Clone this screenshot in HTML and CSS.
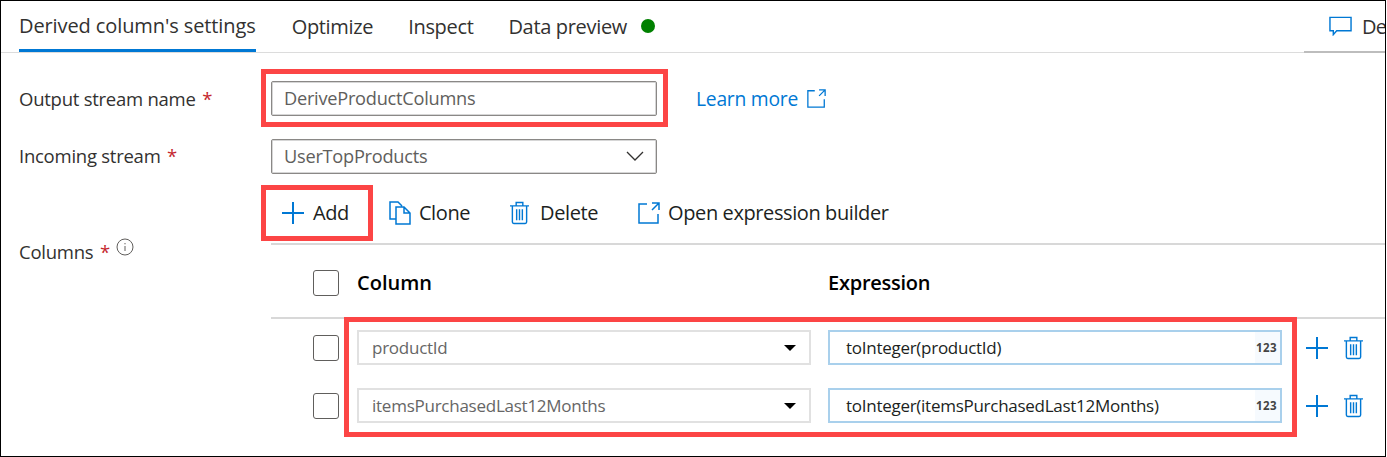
FILE: index.html
```html
<!DOCTYPE html>
<html>
<head>
    <title>Derived column's settings</title>
    <link rel="stylesheet" href="styles.css">
</head>
<body>
    <svg class="defs" width="0" height="0">
        <symbol id="plus" viewBox="0 0 22 22"><path d="M0 11H22M11 0V22" fill="none" stroke="currentColor" stroke-width="2"/></symbol>
        <symbol id="trash" viewBox="0 0 20 24"><path d="M0 4.500H20M2.500 4.500V21.500Q2.500 23 4 23H16Q17.500 23 17.500 21.500V4.500M6.500 4.500V1H13.500V4.500M7 8V19.500M10 8V19.500M13 8V19.500" fill="none" stroke="currentColor" stroke-width="1.500"/></symbol>
        <symbol id="open" viewBox="0 0 22 22"><path d="M9 2H1V21H20V12M14 1H21V8M21 1L14 8" fill="none" stroke="currentColor" stroke-width="1.500"/></symbol>
    </svg>

    <div class="frame">
        <nav class="tabs">
            <a class="tab active">Derived column's settings</a>
            <a class="tab">Optimize</a>
            <a class="tab">Inspect</a>
            <a class="tab">Data preview <span class="dot"></span></a>
            <div class="tabs-right">
                <svg class="comment" viewBox="0 0 24 20"><path d="M1 1H23V15H8L4.500 19V15H1Z" fill="none" stroke="currentColor" stroke-width="1.500"/></svg>
                <span>De</span>
            </div>
        </nav>

        <main class="form">
            <label class="label row-output">Output stream name <span class="req">*</span></label>
            <div class="output-line">
                <div class="field">DeriveProductColumns</div>
                <a class="learn">Learn more <svg class="icon-18"><use href="#open"/></svg></a>
            </div>

            <label class="label row-incoming">Incoming stream <span class="req">*</span></label>
            <div class="field select">
                UserTopProducts
                <svg class="chevron" viewBox="0 0 18 10"><path d="M1 1L9 9L17 1" fill="none" stroke="currentColor" stroke-width="1.300"/></svg>
            </div>

            <label class="label row-columns">Columns <span class="req">*</span>
                <svg class="info" viewBox="0 0 18 18"><circle cx="9" cy="9" r="8" fill="none" stroke="currentColor"/><path d="M9 8V13M9 5V6.300" stroke="currentColor"/></svg>
            </label>
            <div class="columns">
                <div class="toolbar">
                    <button class="tool tool-add"><svg class="icon-22"><use href="#plus"/></svg>Add</button>
                    <button class="tool tool-clone">
                        <svg class="icon-clone" viewBox="0 0 22 24"><path d="M7 18H1V1H9L13 5M7 6H15L21 12V23H7ZM15 6V12H21" fill="none" stroke="currentColor" stroke-width="1.500"/></svg>Clone</button>
                    <button class="tool tool-delete"><svg class="icon-trash"><use href="#trash"/></svg>Delete</button>
                    <button class="tool"><svg class="icon-22"><use href="#open"/></svg>Open expression builder</button>
                </div>

                <div class="grid-head">
                    <span class="check"></span>
                    <strong class="head-col">Column</strong>
                    <strong>Expression</strong>
                </div>

                <div class="grid-body">
                    <div class="grid-row">
                        <span class="check"></span>
                        <div class="col-select">productId<span class="caret"></span></div>
                        <div class="expr"><span>toInteger(productId)</span><span class="type">123</span></div>
                        <svg class="icon-22 act-add"><use href="#plus"/></svg>
                        <svg class="icon-trash act-del"><use href="#trash"/></svg>
                    </div>
                    <div class="grid-row">
                        <span class="check"></span>
                        <div class="col-select">itemsPurchasedLast12Months<span class="caret"></span></div>
                        <div class="expr"><span>toInteger(itemsPurchasedLast12Months)</span><span class="type">123</span></div>
                        <svg class="icon-22 act-add"><use href="#plus"/></svg>
                        <svg class="icon-trash act-del"><use href="#trash"/></svg>
                    </div>
                </div>
            </div>
        </main>

        <!-- red callouts drawn over the form -->
        <div class="callout callout-name"></div>
        <div class="callout callout-add"></div>
        <div class="callout callout-rows"></div>
    </div>
</body>
</html>
```

FILE: styles.css
```css
* {
    box-sizing: border-box;
}

html, body {
    margin: 0;
    background: white;
}

.defs {
    position: absolute;
}

.frame {
    position: relative;
    width: 1386px;
    height: 457px;
    overflow: hidden;
    border: 1px solid black;
    font-family: "Open Sans", "Noto Sans", sans-serif;
    font-size: 18.5px;
    letter-spacing: -0.25px;
    color: #323130;
    background: white;
}

svg {
    flex: none;
}

/* tabs */
.tabs {
    display: flex;
    align-items: stretch;
    height: 52px;
    padding-left: 18px;
    border-bottom: 1px solid #dcdcdc;
    font-size: 20px;
    letter-spacing: -0.33px;
}

.tab {
    display: flex;
    align-items: center;
    gap: 14px;
    height: 51px;
    margin-right: 35px;
    padding-bottom: 1px;
    white-space: nowrap;
}

.tab.active {
    margin-right: 36px;
    padding-top: 2px;
    border-bottom: 3px solid #0078d4;
    letter-spacing: -0.1px;
}

.dot {
    width: 14px;
    height: 14px;
    border-radius: 50%;
    background: #008000;
}

.tabs-right {
    display: flex;
    align-items: center;
    gap: 10px;
    width: 81px;
    height: 52px;
    margin-left: auto;
    padding-left: 25px;
    border-bottom: 2px solid #bdbdbd;
    letter-spacing: -0.8px;
}

.comment {
    width: 23px;
    height: 20px;
    color: #0078d4;
}

/* form */
.form {
    display: grid;
    grid-template-columns: 252px 1fr;
    padding: 27px 0 0 18px;
}

.label {
    white-space: nowrap;
}

.req {
    color: #c4262e;
    margin-left: 2px;
}

.row-output {
    padding-top: 1px;
    line-height: 35px;
}

.row-incoming {
    margin-top: 22px;
    line-height: 36px;
}

.row-columns {
    padding-top: 64px;
    line-height: 24px;
}

.info {
    width: 18px;
    height: 18px;
    margin-left: 2px;
    vertical-align: 3px;
    color: #605e5c;
}

.output-line {
    display: flex;
    align-items: center;
    gap: 39px;
}

.field {
    display: flex;
    align-items: center;
    justify-content: space-between;
    width: 386px;
    height: 35px;
    padding: 0 13px 2px 12px;
    border: 1px solid #8a8886;
    border-radius: 2px;
    box-shadow: 0 0 0 1px #d6d6d6 inset;
    color: #605e5c;
    font-size: 18.2px;
}

.output-line .field {
    padding-bottom: 0;
}

.select {
    margin-top: 23px;
}

.chevron {
    width: 18px;
    height: 10px;
    margin-right: -1px;
    color: #323130;
}

.learn {
    display: flex;
    align-items: center;
    gap: 9px;
    color: #0078d4;
    font-size: 19.3px;
}

.icon-18 {
    width: 19px;
    height: 19px;
}

/* toolbar */
.toolbar {
    display: flex;
    align-items: center;
    gap: 40px;
    height: 71px;
    padding: 8px 0 0 11px;
    border-bottom: 2px solid #d8d8d8;
}

.tool {
    display: flex;
    align-items: center;
    gap: 8px;
    padding: 0;
    border: 0;
    background: none;
    font: inherit;
    font-size: 20px;
    letter-spacing: -0.4px;
    color: #201f1e;
}

.tool svg {
    color: #0078d4;
}

.tool-add {
    gap: 9px;
}

.tool-clone {
    gap: 8px;
}

.tool-delete {
    gap: 11px;
}

.icon-22 {
    width: 22px;
    height: 22px;
}

.icon-clone {
    width: 22px;
    height: 24px;
}

.icon-trash {
    width: 19px;
    height: 24px;
}

/* column grid */
.grid-head {
    display: flex;
    align-items: center;
    height: 74px;
    padding: 3px 0 0 42px;
    border-bottom: 2px solid #d8d8d8;
    color: #000;
    font-size: 20px;
}

.grid-head strong {
    font-weight: 600;
}

.grid-head .head-col {
    width: 471px;
    margin-left: 18px;
    letter-spacing: 0;
}

.check {
    flex: none;
    width: 26px;
    height: 26px;
    border: 1px solid #605e5c;
    border-radius: 3px;
}

.grid-row {
    display: flex;
    align-items: center;
    height: 35px;
    margin-top: 11px;
    margin-bottom: 23px;
    padding-left: 42px;
    font-size: 17px;
}

.grid-row + .grid-row {
    margin-top: 0;
}

.col-select {
    flex: none;
    display: flex;
    align-items: center;
    justify-content: space-between;
    width: 454px;
    height: 35px;
    margin-left: 18px;
    padding: 0 13px;
    border: 2px solid #e1e1e1;
    color: #666;
}

.caret {
    width: 0;
    height: 0;
    border-left: 6px solid transparent;
    border-right: 6px solid transparent;
    border-top: 6px solid black;
}

.expr {
    flex: none;
    display: flex;
    align-items: center;
    justify-content: space-between;
    width: 454px;
    height: 35px;
    margin-left: 17px;
    padding: 0 3px 0 16px;
    border: 2px solid #a9d0ec;
    background: linear-gradient(to right, white 425px, #f6fafe 425px);
    color: #201f1e;
    letter-spacing: -0.27px;
}

.type {
    font-size: 11.5px;
    font-weight: 700;
    letter-spacing: 0.4px;
    color: #444;
}

.act-add {
    margin-left: 24px;
    color: #0078d4;
}

.act-del {
    margin-left: 16px;
    color: #0078d4;
}

/* callouts */
.callout {
    position: absolute;
    border: 5px solid #fc4545;
    pointer-events: none;
}

.callout-name {
    left: 260px;
    top: 68px;
    width: 407px;
    height: 58px;
}

.callout-add {
    left: 260px;
    top: 184px;
    width: 112px;
    height: 56px;
}

.callout-rows {
    left: 343px;
    top: 316px;
    width: 953px;
    height: 120px;
}
```
